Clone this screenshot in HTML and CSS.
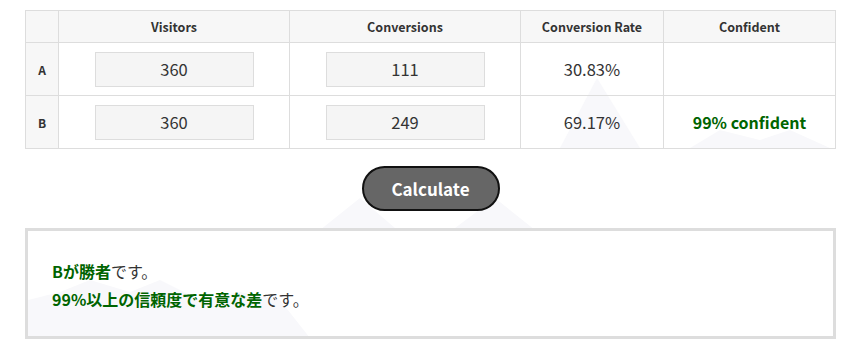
FILE: index.html
```html
<!DOCTYPE html>
<html lang="ja">
<head>
    <meta charset="UTF-8">
    <meta name="viewport" content="width=device-width, initial-scale=1.0">
    <title>AB Test Calculator</title>
    <link rel="stylesheet" href="styles.css">
</head>
<body>
    <svg class="backdrop" viewBox="0 0 851 352" preserveAspectRatio="none" aria-hidden="true">
        <polygon points="28,338 28,300 60,292 90,280 130,292 160,280 200,300 240,292 280,300 310,338" />
        <polygon points="320,230 360,198 395,228 455,228 495,198 535,230" />
        <polygon points="560,148 597,78 640,148" />
        <polygon points="690,148 720,130 760,140 790,130 830,148" />
    </svg>

    <div class="container">
        <table class="ab-table">
            <thead>
                <tr>
                    <th class="label-col"></th>
                    <th class="col-visitors">Visitors</th>
                    <th class="col-conv">Conversions</th>
                    <th class="col-rate">Conversion Rate</th>
                    <th class="col-conf">Confident</th>
                </tr>
            </thead>
            <tbody>
                <tr>
                    <th class="label-col">A</th>
                    <td><input type="text" class="num-input" value="360"></td>
                    <td><input type="text" class="num-input" value="111"></td>
                    <td class="rate">30.83%</td>
                    <td class="confident"></td>
                </tr>
                <tr>
                    <th class="label-col">B</th>
                    <td><input type="text" class="num-input" value="360"></td>
                    <td><input type="text" class="num-input" value="249"></td>
                    <td class="rate">69.17%</td>
                    <td class="confident">99% confident</td>
                </tr>
            </tbody>
        </table>

        <div class="actions">
            <button class="calc-btn">Calculate</button>
        </div>

        <div class="result">
            <p><span class="hl">Bが勝者</span>です。</p>
            <p><span class="hl">99%以上の信頼度で有意な差</span>です。</p>
        </div>
    </div>
</body>
</html>
```

FILE: styles.css
```css
body {
    margin: 0;
    background-color: #fff;
    color: #333;
    font-family: "Noto Sans CJK JP", "Noto Sans", sans-serif;
}

.backdrop {
    position: absolute;
    top: 0;
    left: 0;
    width: 851px;
    height: 352px;
    z-index: 0;
}

.backdrop polygon {
    fill: #f8f8fb;
}

.container {
    position: relative;
    z-index: 1;
    padding: 10px 15px 0 25px;
}

.ab-table {
    width: 811px;
    border-collapse: collapse;
    table-layout: fixed;
}

.ab-table th,
.ab-table td {
    border: 1px solid #ddd;
    text-align: center;
    padding: 0;
}

.ab-table thead th {
    height: 31px;
    font-size: 12.5px;
    font-weight: bold;
    background-color: #f7f7f7;
    color: #333;
}

.ab-table tbody tr {
    height: 53px;
}

.label-col {
    width: 32px;
    background-color: #f7f7f7;
    font-size: 12px;
    font-weight: bold;
}

.col-visitors,
.col-conv {
    width: 230px;
}

.col-rate {
    width: 142px;
}

.num-input {
    box-sizing: border-box;
    width: 159px;
    height: 35px;
    border: 1px solid #ddd;
    background-color: #f5f5f5;
    color: #333;
    font-family: inherit;
    font-size: 16.5px;
    text-align: center;
    padding: 0;
    display: block;
    margin: 0 auto;
}

.rate {
    font-size: 16.5px;
}

.confident {
    font-size: 16px;
    font-weight: bold;
    color: #006400;
}

.actions {
    display: flex;
    justify-content: center;
    padding: 17px 0;
}

.calc-btn {
    width: 138px;
    height: 45px;
    border: 2px solid #111;
    border-radius: 23px;
    background-color: #666;
    color: #fff;
    font-family: inherit;
    font-size: 17px;
    font-weight: bold;
    cursor: pointer;
}

.result {
    box-sizing: border-box;
    width: 811px;
    height: 111px;
    border: 3px solid #ddd;
    padding: 26px 24px;
    font-size: 16px;
}

.result p {
    margin: 0;
    line-height: 28px;
}

.hl {
    color: #006400;
    font-weight: bold;
}
```
